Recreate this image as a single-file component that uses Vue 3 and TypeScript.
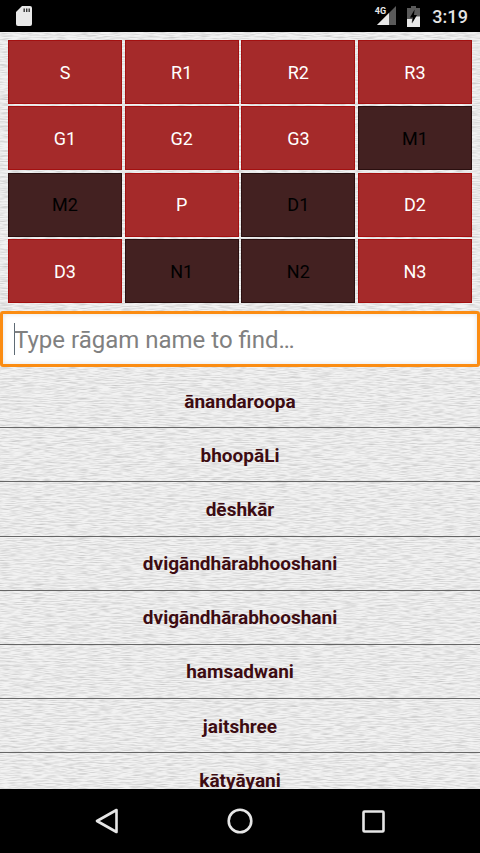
<script setup lang="ts">
interface Swara { label: string; off: boolean }
const swaras: Swara[] = [
  { label: 'S', off: false }, { label: 'R1', off: false }, { label: 'R2', off: false }, { label: 'R3', off: false },
  { label: 'G1', off: false }, { label: 'G2', off: false }, { label: 'G3', off: false }, { label: 'M1', off: true },
  { label: 'M2', off: true }, { label: 'P', off: false }, { label: 'D1', off: true }, { label: 'D2', off: false },
  { label: 'D3', off: false }, { label: 'N1', off: true }, { label: 'N2', off: true }, { label: 'N3', off: false },
]
const ragams: string[] = [
  'ānandaroopa', 'bhoopāLi', 'dēshkār', 'dvigāndhārabhooshani', 'dvigāndhārabhooshani',
  'hamsadwani', 'jaitshree', 'kātyāyani',
]
</script>

<template>
  <div class="screen">
    <header class="status">
      <svg class="sd" width="16" height="20" viewBox="0 0 16 20">
        <path d="M6 0H14a2 2 0 0 1 2 2V18a2 2 0 0 1-2 2H2a2 2 0 0 1-2-2V6Z" fill="#e8e8e8" />
        <path d="M7.5 2.5h1.4v3.5H7.5ZM10 2.5h1.4v3.5H10ZM12.5 2.5h1.4v3.5h-1.4Z" fill="#333" />
      </svg>
      <div class="status-right">
        <span class="net">4G</span>
        <svg class="signal" width="19" height="19" viewBox="0 0 19 19">
          <path d="M19 0V19H0Z" fill="#5a5a5a" />
          <path d="M12 7V19H0Z" fill="#e8e8e8" />
        </svg>
        <svg class="battery" width="13" height="21" viewBox="0 0 13 21">
          <path d="M4 0H9V2H13V21H0V2H4Z" fill="#5a5a5a" />
          <path d="M0 13H5.2L4.6 17 8.6 10.5 13 10.5V21H0Z" fill="#e8e8e8" />
          <path d="M7.6 3.5 3 11.5H6L5 17.5 10 9H7Z" fill="#000" />
        </svg>
        <span class="time">3:19</span>
      </div>
    </header>

    <main class="content">
      <svg class="texture" width="480" height="757" aria-hidden="true">
        <filter id="paper" x="0" y="0" width="100%" height="100%">
          <feTurbulence type="fractalNoise" baseFrequency="0.09 0.95" numOctaves="2" seed="7" />
          <feColorMatrix type="matrix" values="0 0 0 0 0.45  0 0 0 0 0.45  0 0 0 0 0.45  1.3 0 0 0 -0.5" />
        </filter>
        <rect width="480" height="757" fill="#f2f2f2" />
        <rect width="480" height="757" filter="url(#paper)" />
      </svg>

      <section class="grid">
        <button v-for="s in swaras" :key="s.label" class="swara" :class="{ off: s.off }">{{ s.label }}</button>
      </section>

      <div class="search">
        <span class="caret"></span>
        <span class="placeholder">Type rāgam name to find…</span>
      </div>

      <ul class="list">
        <li v-for="(r, i) in ragams" :key="i" class="row">{{ r }}</li>
      </ul>
    </main>

    <nav class="nav">
      <svg width="24" height="26" viewBox="0 0 24 26">
        <path d="M21.5 2 2 13 21.5 24Z" fill="none" stroke="#e6e6e6" stroke-width="2.6" stroke-linejoin="round" />
      </svg>
      <svg width="26" height="26" viewBox="0 0 26 26">
        <circle cx="13" cy="13" r="11.3" fill="none" stroke="#e6e6e6" stroke-width="2.6" />
      </svg>
      <svg width="23" height="23" viewBox="0 0 23 23">
        <rect x="1.5" y="1.5" width="20" height="20" rx="1" fill="none" stroke="#e6e6e6" stroke-width="2.6" />
      </svg>
    </nav>
  </div>
</template>

<style>
html, body { margin: 0; background: #000; }
</style>

<style scoped>
.screen {
  width: 480px;
  height: 853px;
  display: flex;
  flex-direction: column;
  overflow: hidden;
  font-family: Roboto, "Noto Sans", sans-serif;
}
.status {
  flex: 0 0 32px;
  background: #000;
  display: flex;
  align-items: center;
  justify-content: space-between;
  padding: 0 12px 0 16px;
}
.sd { margin-top: -1px; }
.status-right { display: flex; align-items: center; }
.net {
  font-size: 9px;
  font-weight: 700;
  color: #e8e8e8;
  margin: -11px -9px 0 0;
  position: relative;
}
.signal { margin-top: -1px; }
.battery { margin: 0 0 0 11px; }
.time {
  color: #e4e4e4;
  font-size: 18px;
  font-weight: 500;
  margin-left: 12px;
  letter-spacing: 0.1px;
}
.content {
  flex: 1;
  min-height: 0;
  position: relative;
  overflow: hidden;
}
.texture { position: absolute; inset: 0; }
.grid {
  position: relative;
  display: grid;
  grid-template-columns: repeat(4, 1fr);
  grid-auto-rows: 64px;
  gap: 2.4px 2.6px;
  padding: 8px 8px 0;
}
.swara {
  border: 1px solid #a31010;
  background: #a52a2a;
  color: #fff;
  font: 400 18px Roboto, sans-serif;
  padding: 0;
  margin: 0;
  box-sizing: border-box;
}
.swara.off {
  background: #432121;
  border-color: #2a0f0f;
  color: #000;
}
.search {
  position: relative;
  margin-top: 8px;
  height: 56px;
  box-sizing: border-box;
  border: 3px solid #fb8c12;
  border-radius: 3px;
  background: #fff;
  box-shadow: inset 0 0 5px rgba(0, 0, 0, 0.12);
  display: flex;
  align-items: center;
  padding-left: 11px;
}
.caret {
  width: 1px;
  height: 32px;
  background: #5f6b75;
  margin-right: -1px;
}
.placeholder {
  font-size: 24px;
  color: #808080;
  white-space: nowrap;
  margin-top: 2px;
}
.list {
  position: relative;
  list-style: none;
  margin: 0;
  padding: 7px 0 0;
}
.row {
  height: 54.15px;
  box-sizing: border-box;
  border-bottom: 1px solid #666;
  display: flex;
  align-items: center;
  justify-content: center;
  padding-top: 1px;
  font-size: 19px;
  font-weight: 700;
  color: #3d0c12;
}
.row:last-child { border-bottom: 0; }
.nav {
  flex: 0 0 64px;
  background: #000;
  display: flex;
  align-items: center;
  justify-content: space-between;
  padding: 0 95px 0 95px;
}
.nav svg:nth-child(2) { margin-left: -1px; }
</style>
